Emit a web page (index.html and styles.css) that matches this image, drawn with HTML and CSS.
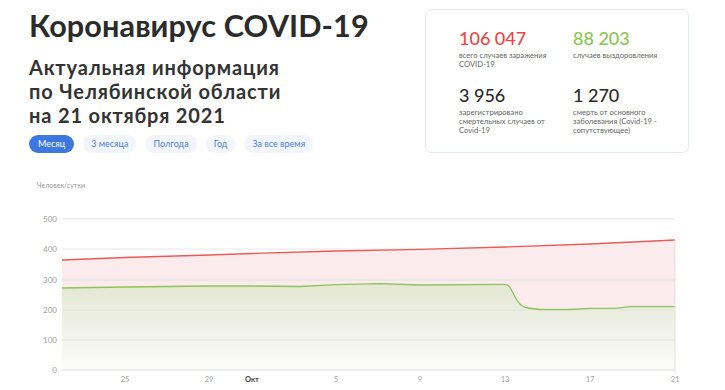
FILE: index.html
```html
<!DOCTYPE html>
<html lang="ru">
<head>
  <meta charset="UTF-8">
  <title>Коронавирус COVID-19</title>
  <link rel="stylesheet" href="styles.css">
</head>
<body>
  <div class="top">
    <div class="intro">
      <h1>Коронавирус COVID-19</h1>
      <h2>Актуальная информация<br>по Челябинской области<br>на 21 октября 2021</h2>
      <div class="tabs">
        <span class="tab active">Месяц</span>
        <span class="tab">3 месяца</span>
        <span class="tab">Полгода</span>
        <span class="tab">Год</span>
        <span class="tab">За все время</span>
      </div>
    </div>
    <div class="card">
      <div class="stat">
        <div class="num red">106 047</div>
        <div class="label">всего случаев заражения<br>COVID-19</div>
      </div>
      <div class="stat">
        <div class="num green">88 203</div>
        <div class="label">случаев выздоровления</div>
      </div>
      <div class="stat">
        <div class="num">3 956</div>
        <div class="label">зарегистрировано<br>смертельных случаев от<br>Covid-19</div>
      </div>
      <div class="stat">
        <div class="num">1 270</div>
        <div class="label">смерть от основного<br>заболевания (Covid-19 -<br>сопутствующее)</div>
      </div>
    </div>
  </div>

  <div class="chart">
    <div class="units">Человек/сутки</div>
    <svg class="plot" width="725" height="215" viewBox="0 0 725 215">
      <defs>
        <linearGradient id="gfill" x1="0" y1="0" x2="0" y2="1">
          <stop offset="0" stop-color="#e4e7d3"/>
          <stop offset="1" stop-color="#fcfcfa"/>
        </linearGradient>
      </defs>
      <g class="grid">
        <line x1="62" y1="43" x2="675" y2="43" stroke="#e8e8f4"/>
        <line x1="62" y1="73" x2="675" y2="73"/>
        <line x1="62" y1="104" x2="675" y2="104"/>
        <line x1="62" y1="134" x2="675" y2="134"/>
        <line x1="62" y1="164" x2="675" y2="164"/>
      </g>
      <path fill="#fcebec" d="M62 84 L125 81.5 L209 79 L252 77.5 L336 75 L420 73.3 L505 71 L590 68 L675 64 L675 194 L62 194 Z"/>
      <path fill="url(#gfill)" d="M62 112 L125 111 L209 110 L252 110 L300 110.5 L336 108.7 L380 107.7 L420 109 L505 108.3 C514 108.3 513 130 528 132 L540 133.5 L570 133.5 L590 132.3 L615 132.3 L630 130.7 L675 130.7 L675 194 L62 194 Z"/>
      <g class="grid over">
        <line x1="62" y1="104" x2="675" y2="104"/>
        <line x1="62" y1="134" x2="675" y2="134"/>
        <line x1="62" y1="164" x2="675" y2="164"/>
      </g>
      <polyline class="line-red" points="62,84 125,81.5 209,79 252,77.5 336,75 420,73.3 505,71 590,68 675,64"/>
      <path class="line-green" d="M62 112 L125 111 L209 110 L252 110 L300 110.5 L336 108.7 L380 107.7 L420 109 L505 108.3 C514 108.3 513 130 528 132 L540 133.5 L570 133.5 L590 132.3 L615 132.3 L630 130.7 L675 130.7"/>
      <line x1="62" y1="194" x2="675" y2="194" stroke="#dcdcdc" stroke-width="1"/>
      <line x1="675" y1="64" x2="675" y2="197" stroke="#e2e2e2" stroke-width="1"/>
      <g class="ylab">
        <text x="57" y="46">500</text>
        <text x="57" y="76">400</text>
        <text x="57" y="107">300</text>
        <text x="57" y="137">200</text>
        <text x="57" y="167">100</text>
        <text x="57" y="197">0</text>
      </g>
      <g class="xlab">
        <text x="125" y="206">25</text>
        <text x="209" y="206">29</text>
        <text x="252" y="206" class="month">Окт</text>
        <text x="336" y="206">5</text>
        <text x="420" y="206">9</text>
        <text x="505" y="206">13</text>
        <text x="590" y="206">17</text>
        <text x="675" y="206">21</text>
      </g>
    </svg>
  </div>
</body>
</html>
```

FILE: styles.css
```css
body {
  margin: 0;
  font-family: Lato, "Open Sans", sans-serif;
  background: #fff;
  color: #2b2b2b;
  width: 725px;
  height: 390px;
  overflow: hidden;
}
.top {
  display: flex;
  padding: 9px 0 0 29px;
}
.intro {
  width: 396px;
}
h1 {
  margin: 0;
  font-size: 30.6px;
  line-height: 34px;
  font-weight: 700;
  letter-spacing: 0.1px;
}
h2 {
  margin: 12px 0 0;
  font-size: 20px;
  line-height: 24px;
  font-weight: 700;
  letter-spacing: 0.85px;
  color: #333;
}
.tabs {
  display: flex;
  gap: 9px;
  margin-top: 8px;
}
.tab {
  height: 18px;
  line-height: 18px;
  padding: 0 8px;
  border-radius: 9px;
  background: #f2f6fc;
  color: #4c7fe0;
  font-size: 9px;
}
.tab.active {
  background: #3d78e0;
  color: #fff;
  padding: 0 9px;
}
.card {
  width: 229px;
  height: 125px;
  border: 1px solid #e3e8f6;
  border-radius: 7px;
  padding: 17px 0 0 33px;
  display: grid;
  grid-template-columns: 114px 114px;
  grid-template-rows: 57px auto;
}
.num {
  font-size: 18px;
  line-height: 22px;
  font-weight: 500;
  color: #2a2a2a;
}
.num.red { color: #e84747; }
.num.green { color: #8cc453; }
.label {
  margin-top: 2px;
  font-size: 7.6px;
  line-height: 9.2px;
  color: #666;
}
.chart {
  margin-top: 27px;
  position: relative;
}
.units {
  padding-left: 37px;
  font-size: 7px;
  line-height: 10px;
  color: #999;
}
.plot {
  display: block;
  margin-top: -14px;
}
.grid line {
  stroke: #e6e6e6;
  stroke-width: 1;
}
.grid.over line {
  stroke: #e1e1dc;
}
.line-red {
  fill: none;
  stroke: #ea5a5a;
  stroke-width: 1.3;
}
.line-green {
  fill: none;
  stroke: #8dc45a;
  stroke-width: 1.3;
}
.ylab text {
  font-family: Lato, sans-serif;
  font-size: 8px;
  fill: #a0a0a0;
  text-anchor: end;
}
.xlab text {
  font-family: Lato, sans-serif;
  font-size: 7.5px;
  fill: #a0a0a0;
  text-anchor: middle;
}
.xlab text.month {
  font-weight: 700;
  fill: #444;
}
```
